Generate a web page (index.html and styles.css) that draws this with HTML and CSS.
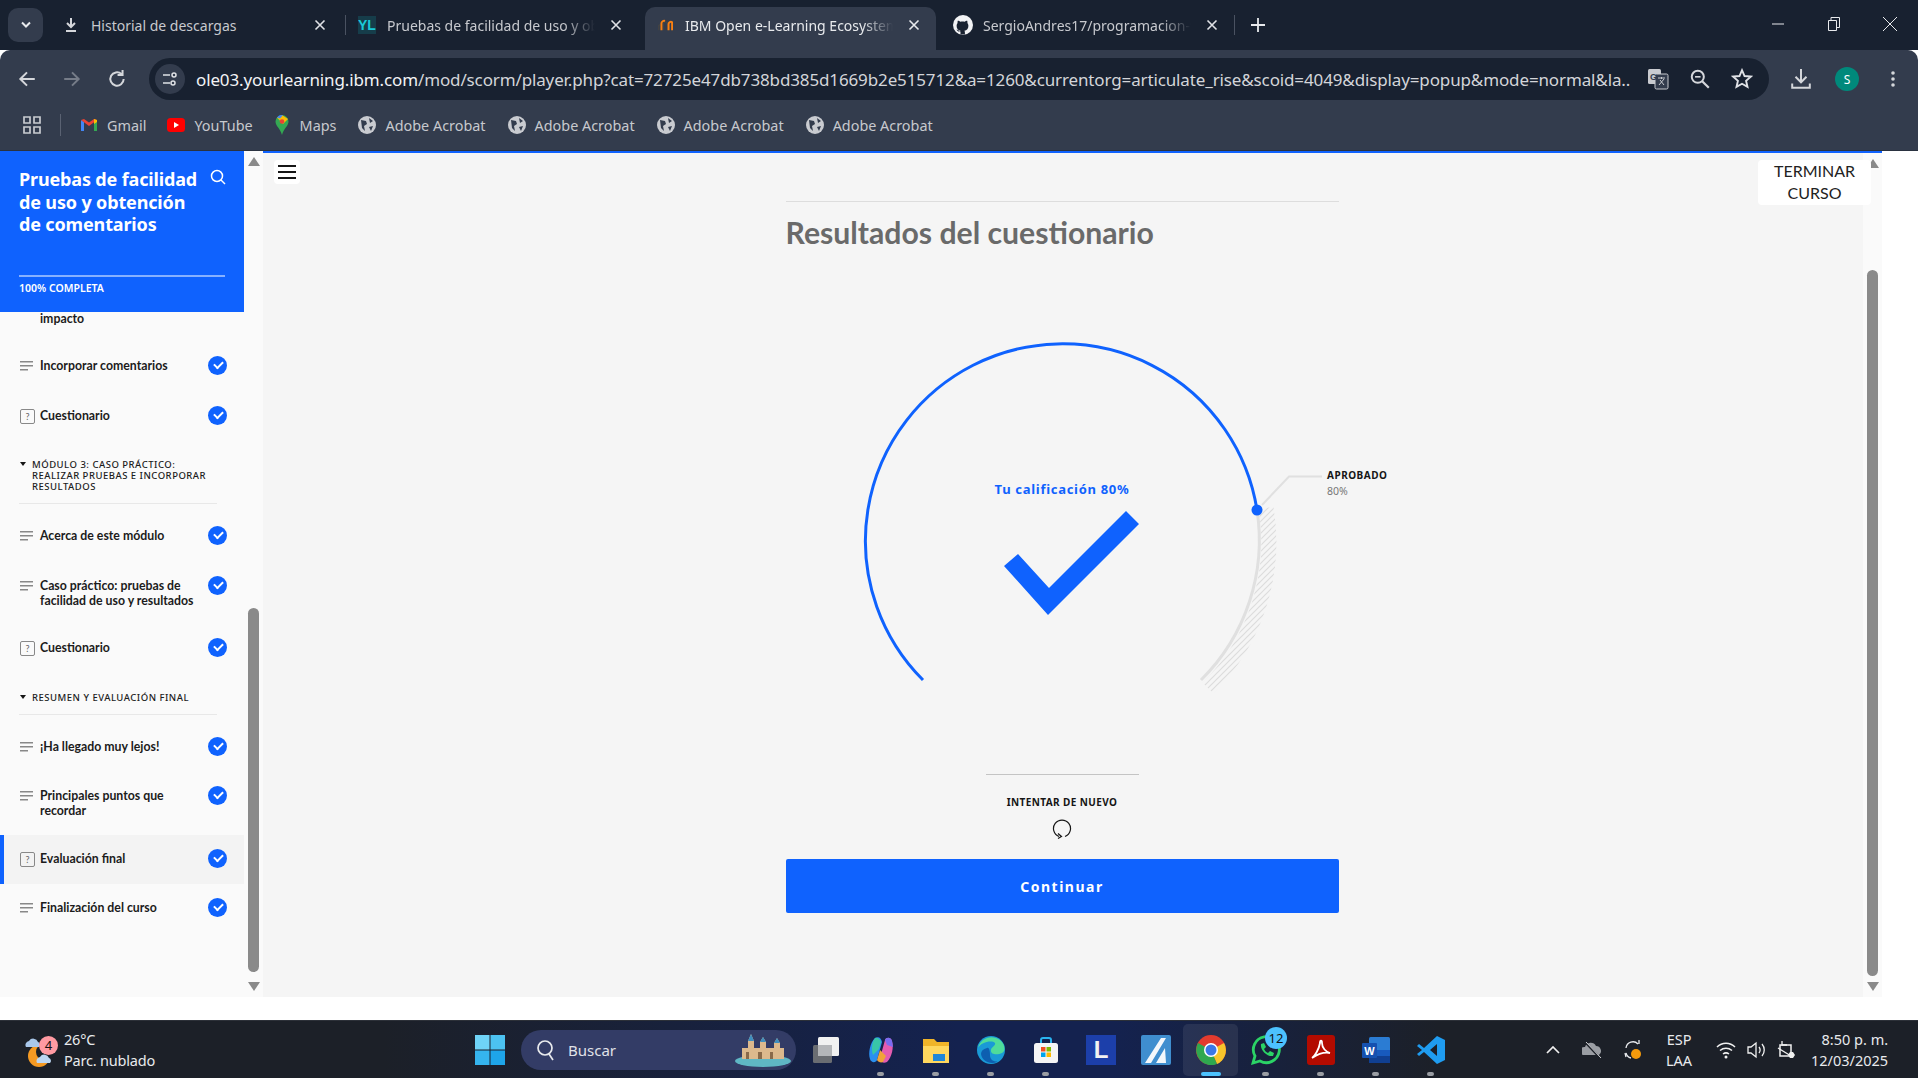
FILE: index.html
```html
<!DOCTYPE html>
<html lang="es">
<head>
    <meta charset="UTF-8">
    <title>IBM Open e-Learning Ecosystem</title>
    <link rel="stylesheet" href="styles.css">
</head>
<body>
    <div class="tabstrip">
        <div class="tab-search"><svg width="12" height="8" viewBox="0 0 12 8"><path d="M2 1.5l4 4 4-4" fill="none" stroke="#e8eaed" stroke-width="2"/></svg></div>
        <div class="tab tab-sep">
            <svg class="favicon" viewBox="0 0 16 16"><path d="M8 1v8M4 6l4 4 4-4M3 14h10" fill="none" stroke="#d5d7db" stroke-width="2"/></svg>
            <span class="tab-title">Historial de descargas</span>
            <svg class="tab-x" viewBox="0 0 12 12"><path d="M1.5 1.5l9 9M10.5 1.5l-9 9" stroke="#e0e2e6" stroke-width="1.6"/></svg>
        </div>
        <div class="tab">
            <svg class="favicon favicon-yl" viewBox="0 0 18 18"><rect width="18" height="18" fill="#163d4a"/><text x="0" y="14" class="yl-text">YL</text></svg>
            <span class="tab-title tab-fade">Pruebas de facilidad de uso y obtención</span>
            <svg class="tab-x" viewBox="0 0 12 12"><path d="M1.5 1.5l9 9M10.5 1.5l-9 9" stroke="#e0e2e6" stroke-width="1.6"/></svg>
        </div>
        <div class="tab tab-active">
            <svg class="favicon" viewBox="0 0 18 18"><path d="M2 9h2M2 9v6M7 15V8a2.500 2.500 0 0 1 5 0v7" fill="none" stroke="#444" stroke-width="1.500"/><path d="M5 15V7a3 3 0 0 1 4-2.500M13 15V8a2.500 2.500 0 0 1 4 -2v9" fill="none" stroke="#f98012" stroke-width="2.200"/></svg>
            <span class="tab-title tab-fade">IBM Open e-Learning Ecosystem</span>
            <svg class="tab-x" viewBox="0 0 12 12"><path d="M1.5 1.5l9 9M10.5 1.5l-9 9" stroke="#e8eaed" stroke-width="1.6"/></svg>
        </div>
        <div class="tab tab-sep">
            <svg class="favicon favicon-big" viewBox="0 0 20 20"><circle cx="10" cy="10" r="10" fill="#f2f3f5"/><path d="M7.500 19.500v-3c-2.500.500-3.500-1-4-2 1.200.200 2 .800 2.700 1.500.500.300 1 .200 1.400-.200-2.500-.500-4-2-4-5 0-1 .400-2 1-2.700-.200-.800-.100-1.700.200-2.400 1 0 2 .600 2.700 1 1.500-.300 2.500-.300 4 0 .700-.400 1.700-1 2.700-1 .300.700.400 1.600.200 2.400.600.700 1 1.700 1 2.700 0 3-1.500 4.500-4 5 .400.400.500 1 .500 1.700v2z" fill="#182130"/></svg>
            <span class="tab-title tab-fade">SergioAndres17/programacion-web</span>
            <svg class="tab-x" viewBox="0 0 12 12"><path d="M1.5 1.5l9 9M10.5 1.5l-9 9" stroke="#e0e2e6" stroke-width="1.6"/></svg>
        </div>
        <svg class="new-tab" width="14" height="14" viewBox="0 0 14 14"><path d="M7 0v14M0 7h14" stroke="#e8eaed" stroke-width="1.800"/></svg>
        <div class="window-btns">
            <span class="window-btn"><svg width="12" height="12" viewBox="0 0 12 12"><path d="M0 6h12" stroke="#e8eaed"/></svg></span>
            <span class="window-btn"><svg width="12" height="14" viewBox="0 0 12 14"><path d="M.5 3.500h8v10h-8zM3 3.500V.5h8.500v10H8.500" fill="none" stroke="#e8eaed"/></svg></span>
            <span class="window-btn"><svg width="14" height="14" viewBox="0 0 14 14"><path d="M0 0l14 14M14 0L0 14" stroke="#e8eaed"/></svg></span>
        </div>
    </div>

    <div class="toolbar">
        <svg class="nav-btn" viewBox="0 0 18 18"><path d="M16 9H3M9 3L3 9l6 6" fill="none" stroke="#d5d7db" stroke-width="1.800"/></svg>
        <svg class="nav-btn" viewBox="0 0 18 18"><path d="M2 9h13M9 3l6 6-6 6" fill="none" stroke="#767c88" stroke-width="1.800"/></svg>
        <svg class="nav-btn" viewBox="0 0 18 18"><path d="M15 9a6 6 0 1 1-2-4.500M14 1v4.500H9.500" fill="none" stroke="#d5d7db" stroke-width="1.800"/></svg>
        <div class="omnibox">
            <span class="site-btn"><svg width="16" height="16" viewBox="0 0 16 16"><path d="M1 4h7M1 12h7" stroke="#e0e2e6" stroke-width="1.500"/><circle cx="12" cy="4" r="2" fill="none" stroke="#e0e2e6" stroke-width="1.500"/><circle cx="11" cy="12" r="2" fill="none" stroke="#e0e2e6" stroke-width="1.500"/></svg></span>
            <span class="url"><b>ole03.yourlearning.ibm.com</b>/mod/scorm/player.php?cat=72725e47db738bd385d1669b2e515712&amp;a=1260&amp;currentorg=articulate_rise&amp;scoid=4049&amp;display=popup&amp;mode=normal&amp;la...</span>
            <svg class="omni-icon" viewBox="0 0 22 22"><rect x="1" y="1" width="13" height="15" rx="1.500" fill="#c9cbd0"/><rect x="8" y="6" width="13" height="15" rx="1.500" fill="#333c4d" stroke="#c9cbd0"/><text x="3" y="12" class="tr-text">G</text><path d="M11 10h7M14.500 9v2M12 17l5-6M13 12l4 5" stroke="#c9cbd0" fill="none"/></svg>
            <svg class="omni-icon" viewBox="0 0 20 20"><circle cx="8" cy="8" r="5.500" fill="none" stroke="#d5d7db" stroke-width="1.800"/><path d="M12 12l6 6" stroke="#d5d7db" stroke-width="2"/><path d="M5.500 8h5" stroke="#d5d7db" stroke-width="1.500"/></svg>
            <svg class="omni-icon" viewBox="0 0 20 20"><path d="M10 2l2.300 5.300 5.700.500-4.300 3.800 1.300 5.600L10 14.300 5 17.200l1.300-5.600L2 7.800l5.700-.500z" fill="none" stroke="#e0e2e6" stroke-width="1.700"/></svg>
        </div>
        <svg class="tool-dl" viewBox="0 0 20 20"><path d="M10 1v11M5 8l5 5 5-5M2 14v4h16v-4" fill="none" stroke="#d5d7db" stroke-width="1.800"/></svg>
        <span class="avatar">S</span>
        <svg class="tool-menu" viewBox="0 0 4 18"><circle cx="2" cy="3" r="1.800" fill="#d5d7db"/><circle cx="2" cy="9" r="1.800" fill="#d5d7db"/><circle cx="2" cy="15" r="1.800" fill="#d5d7db"/></svg>
    </div>

    <div class="bookmarks">
        <svg class="apps" viewBox="0 0 18 18"><path d="M1 1h6v6H1zM11 1h6v6h-6zM1 11h6v6H1zM11 11h6v6h-6z" fill="none" stroke="#c9cbd0" stroke-width="1.700"/></svg>
        <span class="bm-sep"></span>
        <span class="bm bm-gmail"><svg viewBox="0 0 18 14"><path d="M1 13V2l3 2v9z" fill="#4285f4"/><path d="M17 13V2l-3 2v9z" fill="#34a853"/><path d="M1 2l8 6 8-6v0l-3-1-5 3.500L4 1z" fill="#ea4335"/><path d="M14 1l3 1v2l-3 2z" fill="#fbbc04"/></svg>Gmail</span>
        <span class="bm bm-yt"><svg viewBox="0 0 18 14"><rect width="18" height="14" rx="3.500" fill="#f00"/><path d="M7 4l5 3-5 3z" fill="#fff"/></svg>YouTube</span>
        <span class="bm bm-maps"><svg viewBox="0 0 14 20"><path d="M7 0a6.500 6.500 0 0 1 6.500 6.500C13.500 11 9 13 7 20 5 13 .5 11 .5 6.500A6.500 6.500 0 0 1 7 0z" fill="#34a853"/><path d="M2 2.500L7 0l6 4-5 5z" fill="#fbbc04"/><path d="M2 2.500a6.500 6.500 0 0 1 6-2.400L5 3.500z" fill="#4285f4"/><circle cx="7" cy="6.500" r="2.300" fill="#ea4335"/></svg>Maps</span>
        <span class="bm"><svg viewBox="0 0 18 18"><circle cx="9" cy="9" r="9" fill="#c9cbd0"/><path d="M3 4l5 1 1 3-3 2 1 5-3-3zM11 2l4 3-3 2zM11 11l4-1-2 5z" fill="#333c4d"/></svg>Adobe Acrobat</span>
        <span class="bm"><svg viewBox="0 0 18 18"><circle cx="9" cy="9" r="9" fill="#c9cbd0"/><path d="M3 4l5 1 1 3-3 2 1 5-3-3zM11 2l4 3-3 2zM11 11l4-1-2 5z" fill="#333c4d"/></svg>Adobe Acrobat</span>
        <span class="bm"><svg viewBox="0 0 18 18"><circle cx="9" cy="9" r="9" fill="#c9cbd0"/><path d="M3 4l5 1 1 3-3 2 1 5-3-3zM11 2l4 3-3 2zM11 11l4-1-2 5z" fill="#333c4d"/></svg>Adobe Acrobat</span>
        <span class="bm"><svg viewBox="0 0 18 18"><circle cx="9" cy="9" r="9" fill="#c9cbd0"/><path d="M3 4l5 1 1 3-3 2 1 5-3-3zM11 2l4 3-3 2zM11 11l4-1-2 5z" fill="#333c4d"/></svg>Adobe Acrobat</span>
    </div>

    <div class="page">
        <aside class="sidebar">
            <div class="side-head">
                <div class="side-title-row">
                    <h2 class="side-title">Pruebas de facilidad de uso y obtención de&nbsp;comentarios</h2>
                    <svg class="side-search" viewBox="0 0 16 16"><circle cx="7" cy="7" r="5.500" fill="none" stroke="#fff" stroke-width="1.500"/><path d="M11 11l4 4" stroke="#fff" stroke-width="1.500"/></svg>
                </div>
                <div class="side-progress">100% COMPLETA</div>
            </div>
            <div class="side-list">
                <div class="lesson lesson-cut"><span class="lesson-name">impacto</span></div>
                <div class="lesson"><span class="ico-lines"></span><span class="lesson-name">Incorporar comentarios</span><span class="done"></span></div>
                <div class="lesson"><span class="ico-quiz">?</span><span class="lesson-name">Cuestionario</span><span class="done"></span></div>
                <div class="section"><span class="caret"></span><span class="section-name">MÓDULO 3: CASO PRÁCTICO: REALIZAR PRUEBAS E INCORPORAR RESULTADOS</span></div>
                <div class="lesson"><span class="ico-lines"></span><span class="lesson-name">Acerca de este módulo</span><span class="done"></span></div>
                <div class="lesson"><span class="ico-lines"></span><span class="lesson-name">Caso práctico: pruebas de facilidad de uso y resultados</span><span class="done"></span></div>
                <div class="lesson"><span class="ico-quiz">?</span><span class="lesson-name">Cuestionario</span><span class="done"></span></div>
                <div class="section"><span class="caret"></span><span class="section-name">RESUMEN Y EVALUACIÓN FINAL</span></div>
                <div class="lesson"><span class="ico-lines"></span><span class="lesson-name">¡Ha llegado muy lejos!</span><span class="done"></span></div>
                <div class="lesson"><span class="ico-lines"></span><span class="lesson-name">Principales puntos que recordar</span><span class="done"></span></div>
                <div class="lesson lesson-current"><span class="ico-quiz">?</span><span class="lesson-name">Evaluación final</span><span class="done"></span></div>
                <div class="lesson"><span class="ico-lines"></span><span class="lesson-name">Finalización del curso</span><span class="done"></span></div>
            </div>
        </aside>
        <div class="scrollbar scrollbar-left">
            <span class="arrow-up"></span>
            <span class="thumb thumb-left"></span>
            <span class="arrow-down"></span>
        </div>
        <main class="content">
            <div class="menu-btn"><span></span><span></span><span></span></div>
            <div class="finish-btn">TERMINAR CURSO</div>
            <div class="results">
                <h1 class="results-title">Resultados del cuestionario</h1>
                <svg class="gauge" viewBox="786 252 553 522" width="553" height="522">
                    <defs>
                        <pattern id="hatch" width="6" height="6" patternUnits="userSpaceOnUse">
                            <path d="M-1 7L7 -1M-1 1L1 -1M5 7L7 5" stroke="#dcdcdc" stroke-width="1.200"/>
                        </pattern>
                    </defs>
                    <path d="M1266 508A205 205 0 0 1 1208 688" fill="none" stroke="url(#hatch)" stroke-width="15"/>
                    <path d="M1257 510A197 197 0 0 1 1201 680" fill="none" stroke="#e0e0e0" stroke-width="3"/>
                    <path d="M923 680A197 197 0 1 1 1257 510" fill="none" stroke="#0f62fe" stroke-width="3"/>
                    <circle cx="1257" cy="510" r="5.500" fill="#0f62fe"/>
                    <path d="M1262 505L1289 476.500H1322" fill="none" stroke="#e0e0e0" stroke-width="2"/>
                    <text x="1062" y="494" class="gauge-score">Tu calificación 80%</text>
                    <path d="M1126 511L1139 524 1048 615 1004 566 1018 554 1049 588z" fill="#0f62fe"/>
                    <text x="1327" y="479" class="gauge-label">APROBADO</text>
                    <text x="1327" y="495" class="gauge-value">80%</text>
                </svg>
                <div class="retry-rule"></div>
                <div class="retry-label">INTENTAR DE NUEVO</div>
                <svg class="retry-icon" viewBox="0 0 20 22"><path d="M7 19.500A8.500 8.500 0 1 1 13 19.500" fill="none" stroke="#161616" stroke-width="1.200"/><path d="M6 16.500l3.500 3-3.500 2" fill="none" stroke="#161616" stroke-width="1.200"/></svg>
                <button class="continue-btn">Continuar</button>
            </div>
        </main>
        <div class="scrollbar scrollbar-right">
            <span class="arrow-up"></span>
            <span class="thumb thumb-right"></span>
            <span class="arrow-down"></span>
        </div>
    </div>
    <div class="page-gap"></div>

    <footer class="taskbar">
        <div class="tb-weather">
            <svg class="weather-icon" viewBox="0 0 34 40"><circle cx="15" cy="26" r="11" fill="#f59a23"/><circle cx="21" cy="22" r="9" fill="#1c2028"/><path d="M2 17a4 4 0 0 1 3-6 5 5 0 0 1 9 1 3 3 0 0 1 1 5z" fill="#a9c7ea"/><path d="M13 33a4 4 0 0 1 3-6 5 5 0 0 1 9 1 3 3 0 0 1 1 5z" fill="#bcd6f2"/></svg>
            <span class="weather-badge">4</span>
            <div class="weather-text"><span>26°C</span><span>Parc. nublado</span></div>
        </div>
        <svg class="tb-start" viewBox="0 0 30 30"><path d="M0 0h14.500v14.500H0z" fill="#6fd3f7"/><path d="M15.500 0H30v14.500H15.500z" fill="#4cc2f1"/><path d="M0 15.500h14.500V30H0z" fill="#35b4ee"/><path d="M15.500 15.500H30V30H15.500z" fill="#1ea5ea"/></svg>
        <div class="tb-search">
            <svg width="20" height="22" viewBox="0 0 20 22"><circle cx="9" cy="9" r="7" fill="none" stroke="#e8eaed" stroke-width="1.700"/><path d="M13 15l4 6" stroke="#e8eaed" stroke-width="1.700"/></svg>
            <span>Buscar</span>
            <svg class="castle" viewBox="0 0 58 34"><ellipse cx="29" cy="28" rx="28" ry="6" fill="#5fb7c4"/><path d="M8 26V15h6V8l3-7 3 7v7h6V9l3-5 3 5v6h8V10l3-5 3 5v5h4v11z" fill="#dcb98d"/><path d="M14 8l3-7 3 7zM26 9l3-5 3 5zM40 10l3-5 3 5z" fill="#3f8fbf"/><path d="M12 19h3v7h-3zM24 19h4v7h-4zM36 19h3v7h-3z" fill="#8a6a4a"/></svg>
        </div>
        <div class="tb-apps">
            <span class="tb-app"><svg viewBox="0 0 30 30"><rect x="7" y="2" width="21" height="19" rx="1.500" fill="#f1f1f1"/><rect x="2" y="10" width="19" height="18" rx="1.500" fill="#6a6d72"/><rect x="7" y="10" width="14" height="11" fill="#b4b6b9"/></svg></span>
            <span class="tb-app has-dot"><svg viewBox="0 0 30 30"><path d="M9 3c4-2 6 0 7 4l-5 18c-1 3-6 3-7-1-2-6 0-16 5-21z" fill="#2a8ff0"/><path d="M9 3c3-1 5 1 6 4l-2 7-6 6C5 14 6 7 9 3z" fill="#38c6a8"/><path d="M21 27c-4 2-6 0-7-4l5-18c1-3 6-3 7 1 2 6 0 16-5 21z" fill="#e45cb0"/><path d="M19 5c1-3 6-3 7 1l1 6-6-2z" fill="#7a6cf0"/><path d="M11 25l3-10 6 6-3 6c-2 1-5 0-6-2z" fill="#f0a33a"/></svg></span>
            <span class="tb-app has-dot"><svg viewBox="0 0 30 30"><path d="M2 4h11l3 3h12v21H2z" fill="#f0b429"/><path d="M2 11h26v17H2z" fill="#ffd75e"/><rect x="12" y="19" width="12" height="7" fill="#1f86d8"/></svg></span>
            <span class="tb-app has-dot"><svg viewBox="0 0 30 30"><circle cx="15" cy="15" r="14" fill="#1a9ad6"/><path d="M2 13C4 3 16-1 24 5c5 4 6 11 2 13-4 2-12 2-11-3 0-3 5-4 4-7-3-3-14-1-17 5z" fill="#4fdc9b"/><path d="M5 19c1 7 9 11 16 8 2-1-7 1-7-7 0-4-1-8-3-7-4 1-6 3-6 6z" fill="#0d5fb0"/></svg></span>
            <span class="tb-app has-dot"><svg viewBox="0 0 30 30"><path d="M10 8V5a2 2 0 0 1 2-2h6a2 2 0 0 1 2 2v3" fill="none" stroke="#2ab4f0" stroke-width="2"/><rect x="3" y="8" width="24" height="20" rx="2.500" fill="#f5f5f5"/><path d="M10 12h4.500v4.500H10z" fill="#f25022"/><path d="M15.500 12H20v4.500h-4.500z" fill="#7fba00"/><path d="M10 17.500h4.500V22H10z" fill="#00a4ef"/><path d="M15.500 17.500H20V22h-4.500z" fill="#ffb900"/></svg></span>
            <span class="tb-app"><svg viewBox="0 0 30 30"><rect width="30" height="30" fill="#1c3faa"/><text x="15" y="23" class="l-text">L</text></svg></span>
            <span class="tb-app"><svg viewBox="0 0 30 30"><rect width="30" height="30" rx="2" fill="#3f8ecf"/><path d="M4 28L20 3h5L10 28zM15 28l9-15 1 15z" fill="#f3f7fb"/></svg></span>
            <span class="tb-app tb-app-active"><svg viewBox="0 0 30 30"><circle cx="15" cy="15" r="15" fill="#e33b2e"/><path d="M15 15L28 8a15 15 0 0 1-7 21z" fill="#f7c52b"/><path d="M15 15L21 29A15 15 0 0 1 2 8z" fill="#2fa84f"/><circle cx="15" cy="15" r="7" fill="#fff"/><circle cx="15" cy="15" r="5.500" fill="#3b78e7"/></svg></span>
            <span class="tb-app has-dot"><svg viewBox="0 0 30 30"><path d="M2 28l2-7A13 13 0 1 1 9 26z" fill="none" stroke="#2bd366" stroke-width="2.800"/><path d="M10 9l3-1 2 4-2 2c1 2 2 3 4 4l2-2 4 2-1 3c-6 1-13-6-12-12z" fill="#2bd366"/></svg><span class="app-badge">12</span></span>
            <span class="tb-app has-dot"><svg viewBox="0 0 30 30"><rect width="28" height="30" x="1" rx="3" fill="#b30b00"/><path d="M6 23c3-2 7-9 8-15 0-3 2-3 2 0 0 5 4 9 8 10-5-1-12 1-18 5z" fill="none" stroke="#fff" stroke-width="1.800"/></svg></span>
            <span class="tb-app has-dot"><svg viewBox="0 0 30 30"><rect x="8" y="2" width="21" height="26" rx="1.500" fill="#2b7cd3"/><path d="M8 15h21v6H8z" fill="#185abd"/><path d="M8 21h21v7H8z" fill="#103f91"/><rect x="1" y="8" width="15" height="15" rx="1" fill="#1551b0"/><text x="8.500" y="20" class="w-text">W</text></svg></span>
            <span class="tb-app has-dot"><svg viewBox="0 0 30 30"><path d="M21 1l8 4v20l-8 4L8 17l-5 4-2-2 5-4-5-4 2-2 5 4zM21 9l-7 6 7 6z" fill="#1f9cf0"/></svg></span>
        </div>
        <div class="tb-tray">
            <svg class="tray-chevron" viewBox="0 0 14 8"><path d="M1 7l6-6 6 6" fill="none" stroke="#f0f0f0" stroke-width="1.700"/></svg>
            <svg class="tray-cloud" viewBox="0 0 20 20"><path d="M2 15a4 4 0 0 1 1-8 6 6 0 0 1 11-1 5 5 0 0 1 3 9z" fill="#9a9da3"/><path d="M3 2l15 16" stroke="#1c2028" stroke-width="2"/><path d="M4 2l15 16" stroke="#d0d2d6"/></svg>
            <svg class="tray-sync" viewBox="0 0 20 22"><path d="M3 9a7 7 0 0 1 12-4M16 5V1M2 14l1 4" fill="none" stroke="#e8eaed" stroke-width="1.300"/><path d="M3 14a7 7 0 0 0 5 5" fill="none" stroke="#e8eaed" stroke-width="1.300"/><circle cx="13" cy="15" r="5" fill="#f59a0c"/></svg>
            <div class="tray-lang"><span>ESP</span><span>LAA</span></div>
            <svg class="tray-wifi" viewBox="0 0 20 18"><path d="M1 6c5-5 13-5 18 0M4 9.500c3.500-3 8.500-3 12 0M7 13c2-1.500 4-1.500 6 0" fill="none" stroke="#f0f0f0" stroke-width="1.500"/><circle cx="10" cy="16" r="1.500" fill="#f0f0f0"/></svg>
            <svg class="tray-vol" viewBox="0 0 20 18"><path d="M1 6h3l5-4v14l-5-4H1z" fill="none" stroke="#f0f0f0" stroke-width="1.300"/><path d="M12 6c1.500 2 1.500 4 0 6M15 3c3 3.500 3 8.500 0 12" fill="none" stroke="#f0f0f0" stroke-width="1.300"/></svg>
            <svg class="tray-batt" viewBox="0 0 20 20"><path d="M3 5h11v11H3z" fill="none" stroke="#f0f0f0" stroke-width="1.500"/><path d="M1 8l13 8M5 1v4h5" fill="none" stroke="#f0f0f0" stroke-width="1.300"/><path d="M13 12l3 0 2 3-2 3h-3l-2-3z" fill="#f0f0f0"/></svg>
            <div class="tray-clock"><span>8:50 p. m.</span><span>12/03/2025</span></div>
        </div>
    </footer>
</body>
</html>
```

FILE: styles.css
```css
/* base */
body {
    margin: 0;
    width: 1918px;
    height: 1078px;
    overflow: hidden;
    background-color: #fff;
    font-family: "Lato", "Noto Sans", sans-serif;
}

/* tab strip */
.tabstrip {
    display: flex;
    align-items: flex-end;
    height: 50px;
    padding-left: 8px;
    box-sizing: border-box;
    background-color: #182130;
    font-family: "Noto Sans", sans-serif;
    font-size: 14px;
    color: #c7c9ce;
}

.tab-search {
    display: flex;
    align-items: center;
    justify-content: center;
    width: 35px;
    height: 34px;
    margin: 0 7px 8px 0;
    border-radius: 10px;
    background-color: #333c4d;
}

.tab {
    position: relative;
    display: flex;
    align-items: center;
    width: 296px;
    height: 43px;
    padding: 0 0 7px 13px;
    box-sizing: border-box;
}

.tab-sep::after {
    content: "";
    position: absolute;
    right: 0;
    top: 8px;
    width: 1px;
    height: 20px;
    background-color: #4a5261;
}

.tab-active {
    width: 291px;
    margin: 0 2px 0 3px;
    padding-left: 12px;
    border-radius: 10px 10px 0 0;
    background-color: #333c4d;
    color: #e8eaed;
}

.tab-active + .tab {
    width: 297px;
    padding-left: 16px;
}

.favicon {
    flex: none;
    width: 16px;
    height: 16px;
    margin-right: 12px;
}

.favicon-yl {
    width: 18px;
    height: 18px;
    margin: 0 11px 0 -1px;
}

.favicon-big {
    width: 20px;
    height: 20px;
    margin: 0 10px 0 -1px;
}

.yl-text {
    font: bold 14px "Liberation Sans", sans-serif;
    fill: #19c9d8;
}

.tab-title {
    flex: none;
    width: 208px;
    overflow: hidden;
    white-space: nowrap;
    font-size: 14px;
}

.tab-fade {
    -webkit-mask-image: linear-gradient(to right, #000 85%, transparent 100%);
    mask-image: linear-gradient(to right, #000 85%, transparent 100%);
}

.tab-x {
    flex: none;
    width: 12px;
    height: 12px;
    margin-left: 15px;
}

.new-tab {
    margin: 0 0 18px 16px;
}

.window-btns {
    display: flex;
    margin-left: auto;
    align-self: stretch;
}

.window-btn {
    display: flex;
    align-items: center;
    justify-content: center;
    width: 56px;
    padding-bottom: 2px;
}

/* toolbar */
.toolbar {
    display: flex;
    align-items: center;
    height: 50px;
    padding: 8px 0 0 17px;
    box-sizing: border-box;
    background-color: #333c4d;
    border-radius: 10px 10px 0 0;
}

.nav-btn {
    width: 20px;
    height: 20px;
    margin-right: 25px;
}

.nav-btn:nth-child(3) {
    margin-right: 22px;
}

.omnibox {
    display: flex;
    align-items: center;
    width: 1620px;
    height: 42px;
    padding: 0 19px 0 6px;
    box-sizing: border-box;
    border-radius: 21px;
    background-color: #182130;
}

.site-btn {
    display: flex;
    align-items: center;
    justify-content: center;
    flex: none;
    width: 30px;
    height: 30px;
    margin-right: 11px;
    border-radius: 50%;
    background-color: #333c4d;
}

.url {
    flex: none;
    width: 1434px;
    margin-right: -3px;
    white-space: nowrap;
    overflow: hidden;
    font-family: "Noto Sans", sans-serif;
    font-size: 17px;
    letter-spacing: -0.13px;
    color: #d3d5d9;
}

.url b {
    font-weight: normal;
    color: #f2f3f5;
}

.omni-icon {
    flex: none;
    width: 22px;
    height: 22px;
    margin-left: 20px;
}

.tr-text {
    font: bold 9px "Liberation Sans", sans-serif;
    fill: #333c4d;
}

.tool-dl {
    width: 22px;
    height: 22px;
    margin-left: 21px;
}

.avatar {
    display: flex;
    align-items: center;
    justify-content: center;
    width: 24px;
    height: 24px;
    margin-left: 23px;
    border-radius: 50%;
    background-color: #00897b;
    font: 12px "Noto Sans", sans-serif;
    color: #fff;
}

.tool-menu {
    width: 4px;
    height: 18px;
    margin-left: 32px;
}

/* bookmarks */
.bookmarks {
    display: flex;
    align-items: center;
    height: 51px;
    padding-left: 23px;
    box-sizing: border-box;
    background-color: #333c4d;
    border-bottom: 1px solid #2a3240;
    font-family: "Noto Sans", sans-serif;
    font-size: 14.4px;
    color: #c7c9ce;
}

.apps {
    width: 18px;
    height: 18px;
}

.bm-sep {
    width: 1px;
    height: 22px;
    margin: 0 19px;
    background-color: #5a6272;
}

.bm {
    display: flex;
    align-items: center;
    margin-right: 22px;
    white-space: nowrap;
}

.bm svg {
    width: 18px;
    height: 18px;
    margin-right: 9px;
}

.bm-gmail svg,
.bm-yt svg {
    height: 14px;
}

.bm-gmail {
    margin-right: 21px;
}

.bm-maps svg {
    height: 20px;
    width: 14px;
    margin: 0 11px 0 0;
}

/* page */
.page {
    display: flex;
    height: 846px;
}

.page-gap {
    height: 23px;
    background-color: #fff;
}

/* sidebar */
.sidebar {
    flex: none;
    width: 244px;
    overflow: hidden;
    background-color: #fafafa;
}

.side-head {
    height: 161px;
    padding: 17px 19px 0;
    box-sizing: border-box;
    background-color: #0f62fe;
    color: #fff;
}

.side-title-row {
    display: flex;
    justify-content: space-between;
    height: 107px;
    border-bottom: 2px solid rgba(255, 255, 255, 0.5);
}

.side-title {
    width: 184px;
    margin: 0;
    font-family: "Noto Sans", sans-serif;
    font-size: 18px;
    font-weight: 700;
    line-height: 22.5px;
    letter-spacing: -0.15px;
}

.side-search {
    width: 16px;
    height: 16px;
    margin: 1px -1px 0 -8px;
    flex: none;
}

.side-progress {
    margin-top: 4px;
    font-family: "Noto Sans", sans-serif;
    font-size: 10.5px;
    font-weight: 600;
    line-height: 14px;
}

.lesson {
    display: flex;
    align-items: flex-start;
    padding: 16.25px 17px 16.25px 20px;
    font-size: 12.3px;
    font-weight: 700;
    line-height: 15px;
    color: #1c1c1c;
}

.lesson-cut {
    margin-top: -1px;
    padding: 0 17px 16px 40px;
}

.lesson-current {
    box-shadow: inset 4px 0 0 #0f62fe;
    background-color: #f3f3f3;
}

.lesson-name {
    width: 160px;
}

.ico-lines {
    flex: none;
    width: 13px;
    height: 10px;
    margin: 3px 7px 0 0;
    background-image: linear-gradient(#888, #888), linear-gradient(#888, #888), linear-gradient(#888, #888);
    background-repeat: no-repeat;
    background-size: 13px 1.5px, 13px 1.5px, 8px 1.5px;
    background-position: 0 0, 0 4px, 0 8px;
}

.ico-quiz {
    flex: none;
    width: 13px;
    height: 13px;
    margin: 1px 5px 0 0;
    box-sizing: content-box;
    border: 1px solid #888;
    border-radius: 2px;
    font-size: 9px;
    font-weight: 400;
    line-height: 13px;
    text-align: center;
    color: #666;
}

.done {
    flex: none;
    position: relative;
    width: 19px;
    height: 19px;
    margin: -2px 0 0 auto;
    border-radius: 50%;
    background-color: #0f62fe;
}

.done::after {
    content: "";
    position: absolute;
    left: 5.500px;
    top: 5px;
    width: 7px;
    height: 4px;
    border-left: 2px solid #fff;
    border-bottom: 2px solid #fff;
    transform: rotate(-45deg);
}

.section {
    display: flex;
    margin: 0 27px 8px 19px;
    padding: 18px 0 11px 1px;
    border-bottom: 1px solid #e8e8e8;
    font-family: "Noto Sans", sans-serif;
    font-size: 9.500px;
    font-weight: 500;
    line-height: 11px;
    letter-spacing: 0.5px;
    color: #1c1c1c;
}

.section-name {
    max-width: 180px;
}

.caret {
    flex: none;
    width: 0;
    height: 0;
    margin: 3px 6px 0 0;
    border-left: 3.500px solid transparent;
    border-right: 3.500px solid transparent;
    border-top: 4px solid #161616;
}

/* scrollbars */
.scrollbar {
    display: flex;
    flex-direction: column;
    align-items: center;
    flex: none;
    width: 19px;
    box-sizing: border-box;
    padding: 6px 0;
    background-color: #fafafa;
}

.arrow-up,
.arrow-down {
    flex: none;
    width: 0;
    height: 0;
    border-left: 6.500px solid transparent;
    border-right: 6.500px solid transparent;
}

.arrow-up {
    border-bottom: 9px solid #8a8a8a;
}

.arrow-down {
    margin-top: auto;
    border-top: 9px solid #8a8a8a;
}

.thumb {
    flex: none;
    width: 11px;
    border-radius: 6px;
    background-color: #8a8a8a;
}

.thumb-left {
    height: 364px;
    margin-top: 442px;
}

.thumb-right {
    height: 706px;
    margin-top: 102px;
}

/* main */
.content {
    position: relative;
    flex: 1;
    padding-right: 2px;
    border-top: 2px solid #0f62fe;
    background-color: #f5f5f5;
}

.scrollbar-right {
    border-top: 2px solid #0f62fe;
    margin-right: 36px;
}

.menu-btn {
    position: absolute;
    left: 11px;
    top: 7px;
    display: flex;
    flex-direction: column;
    justify-content: space-between;
    width: 18px;
    height: 14px;
    padding: 5px 4px;
    border-radius: 4px;
    background-color: #fff;
}

.menu-btn span {
    height: 2px;
    background-color: #161616;
}

.finish-btn {
    position: absolute;
    right: -8px;
    top: 7px;
    width: 113px;
    height: 45px;
    padding: 0 10px;
    box-sizing: border-box;
    border-radius: 4px;
    background-color: #fff;
    font-size: 16px;
    line-height: 22px;
    text-align: center;
    color: #222;
}

.results {
    display: flex;
    flex-direction: column;
    align-items: center;
    width: 553px;
    margin: 0 auto;
    padding-top: 48px;
}

.results-title {
    align-self: stretch;
    margin: 0;
    padding: 12px 0 2px;
    border-top: 1px solid #ddd;
    font-size: 30.2px;
    font-weight: 700;
    line-height: 36px;
    color: #6a6a6a;
}

.gauge {
    display: block;
    overflow: visible;
}

.gauge-score {
    font-family: "Noto Sans", sans-serif;
    font-size: 13px;
    font-weight: 700;
    letter-spacing: 0.7px;
    text-anchor: middle;
    fill: #0f62fe;
}

.gauge-label {
    font-family: "Noto Sans", sans-serif;
    font-size: 10px;
    font-weight: 700;
    letter-spacing: 0.5px;
    fill: #161616;
}

.gauge-value {
    font-family: "Noto Sans", sans-serif;
    font-size: 10.500px;
    fill: #777;
}

.retry-rule {
    width: 153px;
    height: 1px;
    background-color: #c4c4c4;
}

.retry-label {
    margin-top: 20px;
    font-family: "Noto Sans", sans-serif;
    font-size: 10px;
    font-weight: 700;
    line-height: 14px;
    letter-spacing: 0.4px;
    color: #161616;
}

.retry-icon {
    width: 20px;
    height: 22px;
    margin-top: 8px;
}

.continue-btn {
    align-self: stretch;
    height: 54px;
    margin-top: 20px;
    border: none;
    border-radius: 2px;
    background-color: #0f62fe;
    font-family: "Noto Sans", sans-serif;
    font-size: 14px;
    font-weight: 700;
    letter-spacing: 1.5px;
    color: #fff;
}

/* taskbar */
.taskbar {
    display: flex;
    align-items: center;
    height: 58px;
    box-sizing: border-box;
    border-top: 1px solid #2c3038;
    background: linear-gradient(to right, #1c2028 0, #1c2028 20%, #14224f 50%, #14224f 58%, #1c2028 75%, #1c2028 100%);
    color: #e8eaed;
    font-family: "Noto Sans", sans-serif;
}

.tb-weather {
    position: relative;
    display: flex;
    align-items: center;
    width: 475px;
    padding-left: 24px;
    box-sizing: border-box;
}

.weather-icon {
    width: 34px;
    height: 40px;
}

.weather-badge {
    position: absolute;
    left: 39px;
    top: 6px;
    width: 19px;
    height: 19px;
    border-radius: 50%;
    background-color: #ff9aa2;
    font-size: 13px;
    line-height: 19px;
    text-align: center;
    color: #111;
}

.weather-text {
    display: flex;
    flex-direction: column;
    gap: 2px;
    margin-left: 6px;
    font-size: 14.5px;
    line-height: 19px;
    letter-spacing: -0.2px;
}

.tb-start {
    flex: none;
    width: 30px;
    height: 30px;
}

.tb-search {
    display: flex;
    align-items: center;
    flex: none;
    width: 275px;
    height: 40px;
    margin-left: 16px;
    padding: 0 4px 0 15px;
    box-sizing: border-box;
    border-radius: 20px;
    background-color: #333c66;
    font-size: 15px;
    color: #e0e2e8;
}

.tb-search span {
    margin-left: 12px;
}

.castle {
    width: 58px;
    height: 34px;
    margin-left: auto;
}

.tb-apps {
    display: flex;
    margin-left: 2px;
}

.tb-app {
    position: relative;
    display: flex;
    align-items: center;
    justify-content: center;
    width: 55px;
    height: 52px;
}

.tb-app svg {
    width: 30px;
    height: 30px;
}

.has-dot::after,
.tb-app-active::after {
    content: "";
    position: absolute;
    left: 24px;
    bottom: 0;
    width: 7px;
    height: 4px;
    border-radius: 2px;
    background-color: #9a9da3;
}

.tb-app-active {
    border-radius: 5px;
    background-color: rgba(255, 255, 255, 0.08);
}

.tb-app-active::after {
    left: 18px;
    width: 20px;
    background-color: #4cc2ff;
}

.app-badge {
    position: absolute;
    left: 27px;
    top: 3px;
    width: 22px;
    height: 22px;
    border-radius: 50%;
    background-color: #4cc2ff;
    font-size: 13px;
    line-height: 22px;
    text-align: center;
    color: #111;
}

.l-text {
    font: bold 24px "Liberation Sans", sans-serif;
    text-anchor: middle;
    fill: #f2f2f2;
}

.w-text {
    font: bold 11px "Liberation Sans", sans-serif;
    text-anchor: middle;
    fill: #fff;
}

.tb-tray {
    display: flex;
    align-items: center;
    margin-left: 88px;
    font-size: 14.5px;
}

.tray-chevron {
    width: 14px;
    height: 8px;
}

.tray-cloud {
    width: 20px;
    height: 20px;
    margin-left: 22px;
}

.tray-sync {
    width: 20px;
    height: 22px;
    margin-left: 21px;
}

.tray-lang {
    display: flex;
    flex-direction: column;
    gap: 2px;
    margin-left: 23px;
    line-height: 19px;
    text-align: center;
}

.tray-wifi {
    width: 20px;
    height: 18px;
    margin-left: 24px;
}

.tray-vol {
    width: 20px;
    height: 18px;
    margin-left: 11px;
}

.tray-batt {
    width: 20px;
    height: 20px;
    margin-left: 10px;
}

.tray-clock {
    display: flex;
    flex-direction: column;
    gap: 2px;
    width: 90px;
    margin-left: 1px;
    line-height: 19px;
    text-align: right;
}
```
